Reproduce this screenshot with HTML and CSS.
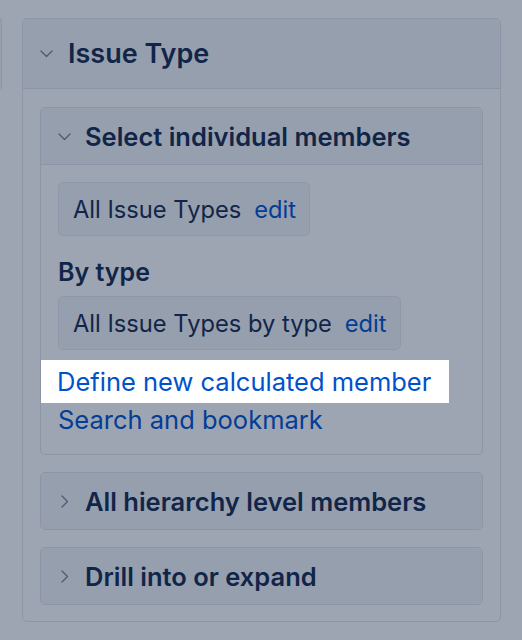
FILE: index.html
```html
<!DOCTYPE html>
<html lang="en">
<head>
<meta charset="utf-8">
<title>Issue Type</title>
<link rel="stylesheet" href="styles.css">
</head>
<body>
<div class="page">
  <div class="stub"></div>
  <section class="panel outer">
    <header class="panel-head outer-head">
      <svg class="chev" viewBox="0 0 13 13" width="13" height="13"><polyline points="1,4 6.5,9.5 12,4" /></svg>
      <h2 class="outer-title">Issue Type</h2>
    </header>
    <div class="outer-body">
      <section class="panel inner">
        <header class="panel-head inner-head">
          <svg class="chev" viewBox="0 0 13 13" width="13" height="13"><polyline points="1,4 6.5,9.5 12,4" /></svg>
          <h3 class="inner-title">Select individual members</h3>
        </header>
        <div class="inner-body">
          <div class="chip"><span>All Issue Types</span><a class="link">edit</a></div>
          <div class="group-label">By type</div>
          <div class="chip"><span>All Issue Types by type</span><a class="link">edit</a></div>
          <div class="actions">
            <a class="action link spot">Define new calculated member</a>
            <a class="action link">Search and bookmark</a>
          </div>
        </div>
      </section>
      <section class="panel inner collapsed">
        <header class="panel-head inner-head">
          <svg class="chev" viewBox="0 0 13 13" width="13" height="13"><polyline points="4,1 9.5,6.5 4,12" /></svg>
          <h3 class="inner-title">All hierarchy level members</h3>
        </header>
      </section>
      <section class="panel inner collapsed">
        <header class="panel-head inner-head">
          <svg class="chev" viewBox="0 0 13 13" width="13" height="13"><polyline points="4,1 9.5,6.5 4,12" /></svg>
          <h3 class="inner-title">Drill into or expand</h3>
        </header>
      </section>
    </div>
  </section>
</div>
<div class="blanket"></div>
</body>
</html>
```

FILE: styles.css
```css
html, body {
  margin: 0;
  padding: 0;
  background: #ffffff;
}
body {
  font-family: Inter, "Noto Sans", sans-serif;
  color: #172b4d;
  width: 522px;
  height: 640px;
  overflow: hidden;
}
.page {
  display: flex;
  align-items: flex-start;
  padding-top: 18px;
}
.stub {
  width: 1px;
  height: 69px;
  border: 1px solid #e6e8ec;
  border-left: none;
  border-radius: 0 4px 4px 0;
  background: #f4f5f7;
  margin-right: 20px;
  flex: none;
}
.panel {
  border: 1px solid #e3e5ea;
  border-radius: 5px;
  background: #ffffff;
  overflow: hidden;
}
.outer {
  width: 477px;
  flex: none;
}
.panel-head {
  display: flex;
  align-items: center;
  background: #f4f5f7;
}
.outer-head {
  height: 69px;
  border-bottom: 1px solid #e3e5ea;
  padding-left: 17px;
  gap: 15px;
}
.outer-title {
  margin: 0;
  font-size: 27px;
  font-weight: 600;
}
.chev {
  flex: none;
  fill: none;
  stroke: #7a8599;
  stroke-width: 1.4;
  stroke-linecap: round;
  stroke-linejoin: round;
}
.outer-body {
  padding: 18px 17px 16px;
  display: flex;
  flex-direction: column;
  gap: 17px;
}
.inner-head {
  height: 56px;
  padding-left: 17px;
  gap: 14px;
}
.inner .inner-head {
  border-bottom: 1px solid #e3e5ea;
}
.inner.collapsed .inner-head {
  border-bottom: none;
}
.inner-title {
  margin: 0;
  font-size: 25.5px;
  font-weight: 600;
}
.inner-body {
  padding: 17px 17px 16px;
  display: flex;
  flex-direction: column;
  align-items: flex-start;
}
.chip {
  display: flex;
  align-items: center;
  gap: 13px;
  height: 52px;
  padding: 0 13px 0 14px;
  background: #f4f5f7;
  border: 1px solid #e8eaee;
  border-radius: 5px;
  font-size: 23.7px;
}
.link {
  color: #0052cc;
  text-decoration: none;
}
.group-label {
  font-size: 25px;
  font-weight: 600;
  line-height: 32px;
  margin: 20px 0 8px;
}
.actions {
  display: flex;
  flex-direction: column;
  align-items: flex-start;
  margin-top: 14px;
}
.action {
  display: block;
  font-size: 25.5px;
  line-height: 37px;
}
.spot {
  position: relative;
  z-index: 2;
  background: #ffffff;
  padding: 3px 18px 3px 17px;
  margin: -4px 0 -2px -18px;
}
.blanket {
  position: fixed;
  inset: 0;
  background: rgba(9, 30, 66, 0.4);
  z-index: 1;
}
```
